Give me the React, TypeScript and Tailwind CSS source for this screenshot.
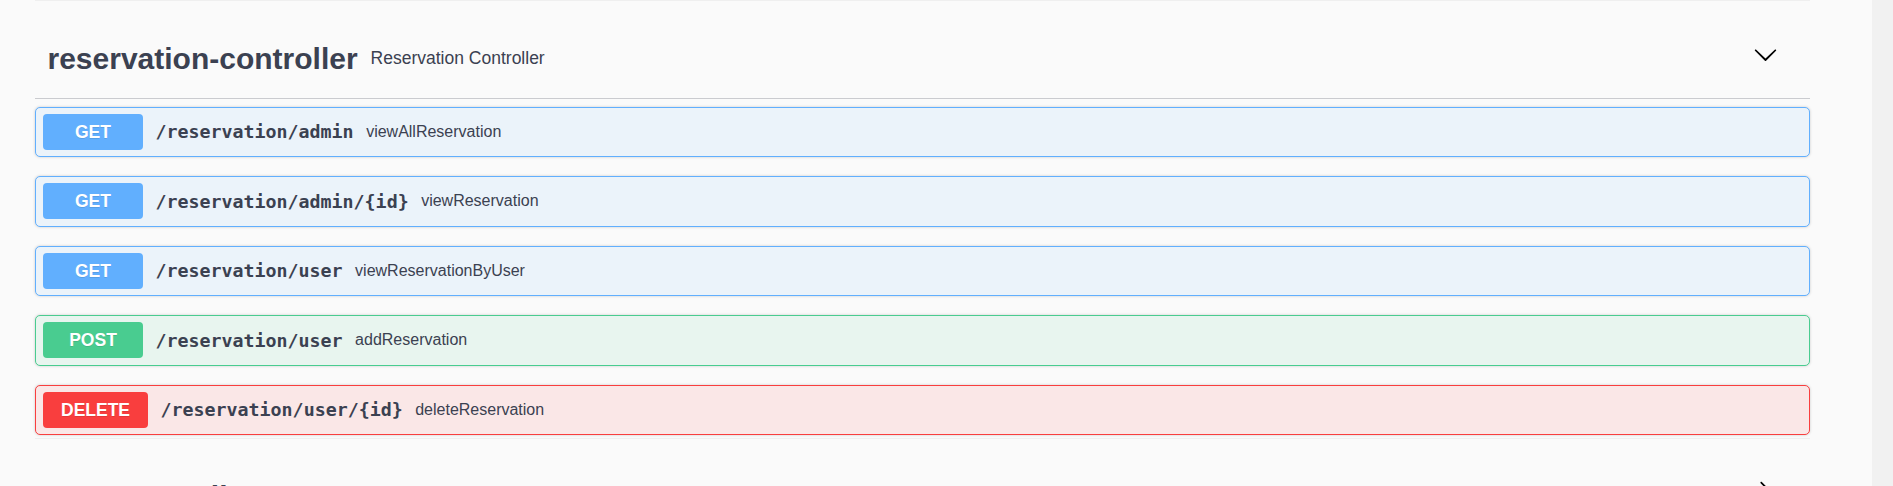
const ops = [
  { method: 'GET', path: '/reservation/admin', summary: 'viewAllReservation' },
  { method: 'GET', path: '/reservation/admin/{id}', summary: 'viewReservation' },
  { method: 'GET', path: '/reservation/user', summary: 'viewReservationByUser' },
  { method: 'POST', path: '/reservation/user', summary: 'addReservation' },
  { method: 'DELETE', path: '/reservation/user/{id}', summary: 'deleteReservation' },
];

const methodStyles: Record<string, { block: string; badge: string }> = {
  GET: { block: 'bg-[#ebf3fa] border-[#61affe]', badge: 'bg-[#61affe]' },
  POST: { block: 'bg-[#e8f5ef] border-[#49cc90]', badge: 'bg-[#49cc90]' },
  DELETE: { block: 'bg-[#fae7e7] border-[#f93e3e]', badge: 'bg-[#f93e3e]' },
};

function ArrowDown() {
  return (
    <svg width="25" height="25" viewBox="0 0 20 20" fill="#000">
      <path d="M17.418 6.109c.272-.268.709-.268.979 0s.271.701 0 .969l-7.908 7.83c-.27.268-.707.268-.979 0l-7.908-7.83c-.27-.268-.27-.701 0-.969.271-.268.709-.268.979 0L10 13.25l7.418-7.141z" />
    </svg>
  );
}

function ArrowRight() {
  return (
    <svg width="25" height="25" viewBox="0 0 20 20" fill="#000">
      <path d="M13.25 10L6.109 2.58c-.268-.27-.268-.707 0-.979.268-.27.701-.27.969 0l7.83 7.908c.268.271.268.709 0 .979l-7.83 7.908c-.268.271-.701.27-.969 0-.268-.269-.268-.707 0-.979L13.25 10z" />
    </svg>
  );
}

function TagHeader({ name, description, open }: { name: string; description?: string; open: boolean }) {
  return (
    <>
      <div className="h-px bg-[#efefef]" />
      <div className="flex items-center h-[98px] pt-[17px] pl-[12.5px] border-b border-[rgba(59,65,81,0.25)]">
        <div className="flex-1 flex items-center">
          <span className="text-[30px] font-bold text-[#3b4151]">{name}</span>
          {description && (
            <span className="ml-[13px] text-[17.5px] text-[#3b4151]">{description}</span>
          )}
        </div>
        <button className="mr-[32px] mb-[8px]">{open ? <ArrowDown /> : <ArrowRight />}</button>
      </div>
    </>
  );
}

export default function App() {
  return (
    <div className="flex w-full h-[486px] overflow-hidden bg-[#fafafa] font-['Liberation_Sans',Arial,sans-serif]">
      <div className="flex-1 pl-[35px]">
        <div className="w-[1775px]">
          {/* reservation-controller */}
          <TagHeader name="reservation-controller" description="Reservation Controller" open />
          <div className="pt-[7.5px]">
            {ops.map((op, i) => {
              const s = methodStyles[op.method];
              return (
                <div
                  key={i}
                  className={`flex items-center h-[50.5px] pl-[7px] border rounded-[5px] shadow-[0_0_3px_rgba(0,0,0,0.19)] ${s.block} ${
                    i === ops.length - 1 ? 'mb-[3px]' : 'mb-[19px]'
                  }`}
                >
                  <span
                    className={`flex items-center justify-center min-w-[100px] h-[36px] px-[18px] rounded-[4px] text-[17.5px] font-bold text-white [text-shadow:0_1px_0_rgba(0,0,0,0.1)] ${s.badge}`}
                  >
                    {op.method}
                  </span>
                  <span className="ml-[12.5px] font-['DejaVu_Sans_Mono',monospace] text-[18.3px] font-bold text-[#3b4151]">
                    {op.path}
                  </span>
                  <span className="ml-[12.5px] text-[16px] text-[#3b4151]">{op.summary}</span>
                </div>
              );
            })}
          </div>

          {/* next tag, cut off by the viewport */}
          <TagHeader name="seat-controller" description="Seat Controller" open={false} />
        </div>
      </div>
      <div className="w-[21px] bg-[#f1f1f1]" />
    </div>
  );
}
